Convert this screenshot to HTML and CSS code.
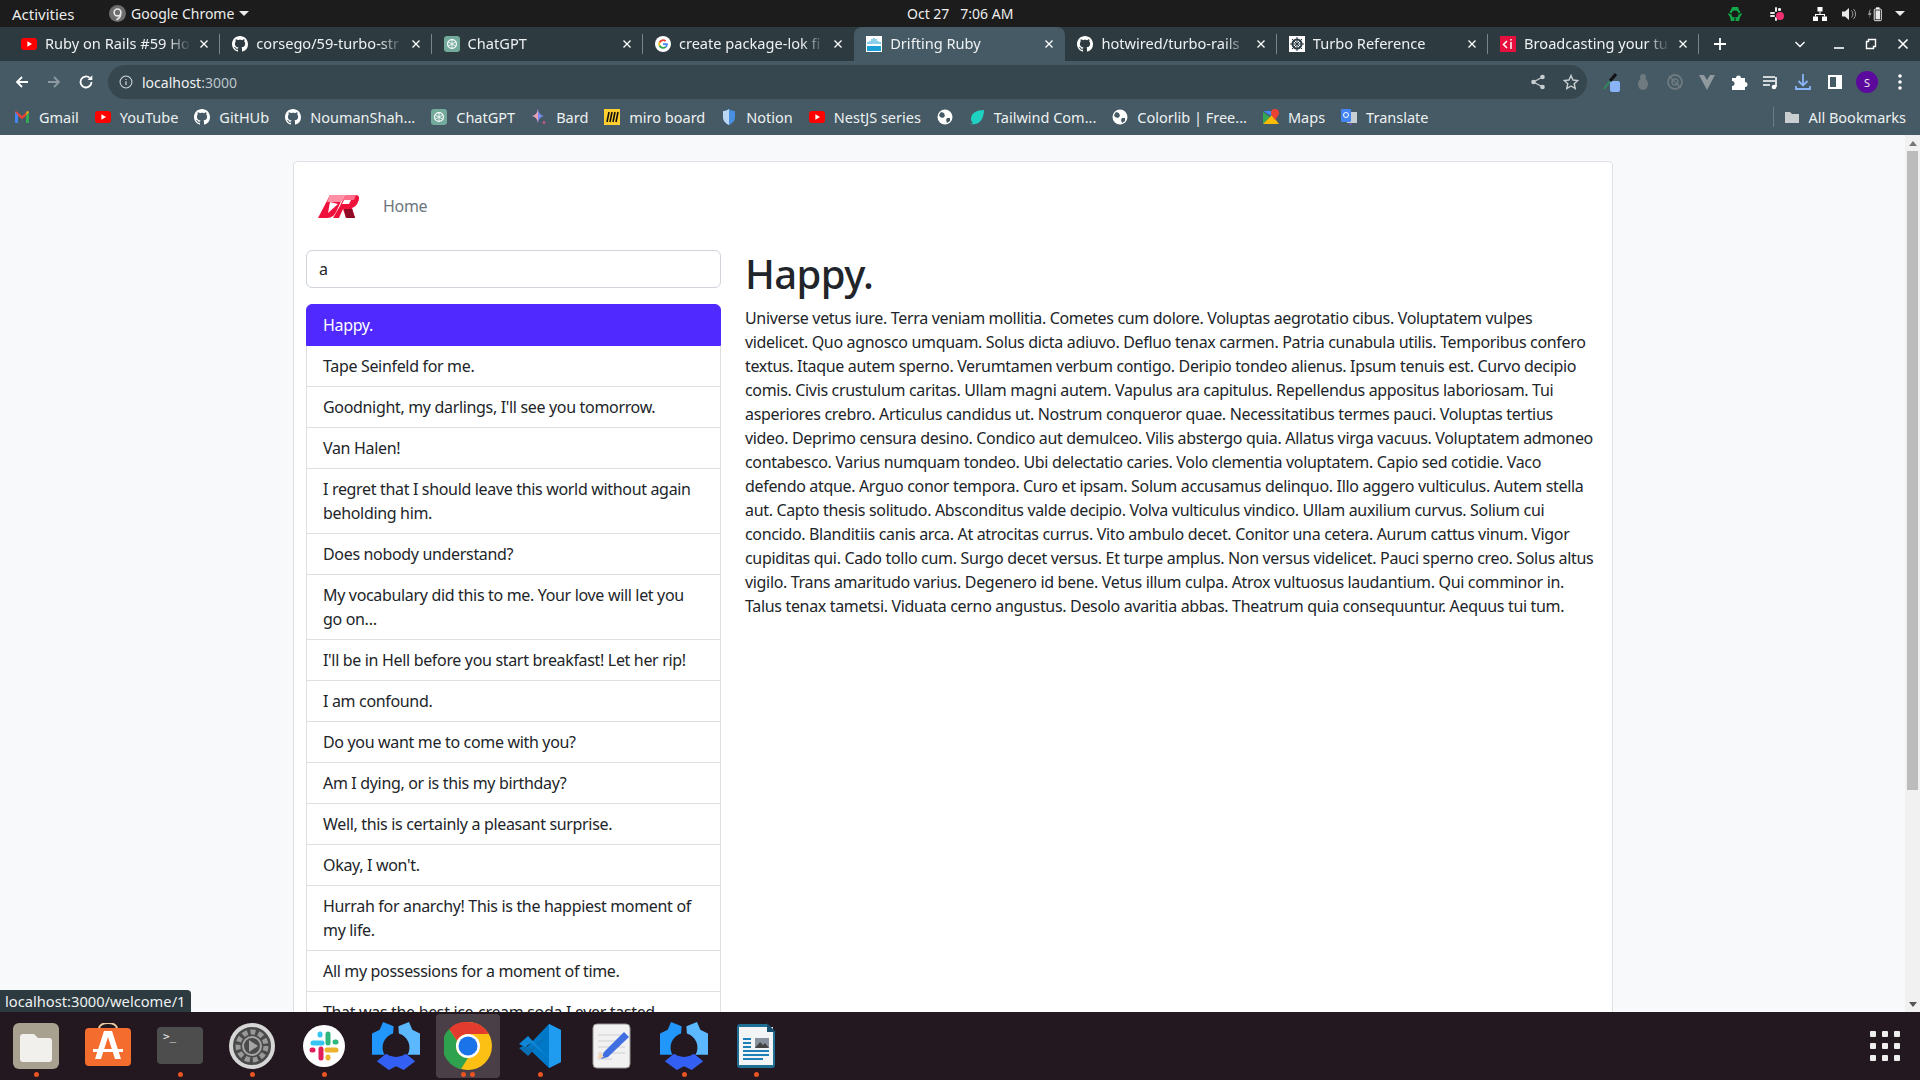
FILE: index.html
```html
<!DOCTYPE html>
<html lang="en">
<head>
<meta charset="utf-8">
<title>Drifting Ruby</title>
<link rel="stylesheet" href="styles.css">
</head>
<body>
<svg class="defs" width="0" height="0" aria-hidden="true">
  <symbol id="gh" viewBox="0 0 16 16"><path fill="#fff" d="M8 0C3.58 0 0 3.58 0 8c0 3.54 2.29 6.53 5.47 7.59.4.07.55-.17.55-.38 0-.19-.01-.82-.01-1.49-2.01.37-2.53-.49-2.69-.94-.09-.23-.48-.94-.82-1.13-.28-.15-.68-.52-.01-.53.63-.01 1.08.58 1.23.82.72 1.21 1.87.87 2.33.66.07-.52.28-.87.51-1.07-1.78-.2-3.64-.89-3.64-3.95 0-.87.31-1.59.82-2.15-.08-.2-.36-1.02.08-2.12 0 0 .67-.21 2.2.82.64-.18 1.32-.27 2-.27s1.36.09 2 .27c1.53-1.04 2.2-.82 2.2-.82.44 1.1.16 1.92.08 2.12.51.56.82 1.27.82 2.15 0 3.07-1.87 3.75-3.65 3.95.29.25.54.73.54 1.48 0 1.07-.01 1.93-.01 2.2 0 .21.15.46.55.38A8.01 8.01 0 0 0 16 8c0-4.42-3.58-8-8-8z"/></symbol>
  <symbol id="yt" viewBox="0 0 16 16"><rect y="2" width="16" height="12" rx="3" fill="#f00"/><path d="M6.4 5.2 11 8l-4.6 2.8z" fill="#fff"/></symbol>
  <symbol id="gpt" viewBox="0 0 16 16"><rect width="16" height="16" rx="3" fill="#74aa9c"/><circle cx="8" cy="8" r="4.4" fill="none" stroke="#fff" stroke-width="1.2"/><path d="M8 3.2v9.6M3.8 5.6l8.4 4.8M12.200 5.600l-8.400 4.800" stroke="#fff" stroke-width=".8"/></symbol>
  <symbol id="globe" viewBox="0 0 16 16"><circle cx="8" cy="8" r="7.500" fill="#fff"/><path d="M4 3l3 1 1 3-2 2-3-1-1-2zM10 9l3 0 0 3-3 2-1-3z" fill="#455a64"/></symbol>
  <symbol id="x" viewBox="0 0 10 10"><path d="M1.500 1.500l7 7M8.500 1.500l-7 7" stroke="#fff" stroke-width="1.300" fill="none"/></symbol>
  <symbol id="sm" viewBox="0 0 100 100">
    <path fill="#2196fb" d="M23 0 45 9 44 24A30 30 0 0 0 26 68H0V24L16 16z"/>
    <path fill="#5cb8ff" d="M77 0 55 9 56 24A30 30 0 0 1 74 68H100V24L84 16z"/>
    <path fill="#3360f2" d="M10 82 29 66Q50 80 71 66L90 82 66 100 50 92 35 100z"/>
  </symbol>
</svg>

<div class="top-bar">
  <span class="activities">Activities</span>
  <span class="app-menu">
    <svg class="app-ico" viewBox="0 0 16 16"><circle cx="8" cy="8" r="8" fill="#6e6e6e"/><circle cx="8" cy="7" r="3.200" fill="none" stroke="#e8e8e8" stroke-width="1.500"/><path d="M11 8c0 4-2 5-4 6" stroke="#e8e8e8" stroke-width="1.500" fill="none"/></svg>
    Google Chrome <i class="caret"></i>
  </span>
  <span class="clock">Oct 27&nbsp;&nbsp; 7:06 AM</span>
  <span class="tray">
    <svg class="t1" viewBox="0 0 16 16"><path d="M5 1h6l1 3 3 4-2 3-1 4H4l-1-4-2-3 3-4z" fill="#12a84a"/><circle cx="8" cy="8" r="3.600" fill="#1a1a1a"/><path d="M1 6l3 2M15 6l-3 2M8 16v-4" stroke="#1a1a1a" stroke-width="1.200"/></svg>
    <svg class="t2" viewBox="0 0 16 16"><g fill="#e8e8e8"><rect x="1" y="6" width="5" height="2" rx="1"/><rect x="6" y="1" width="2" height="5" rx="1"/><rect x="1" y="9" width="5" height="2" rx="1"/><rect x="6" y="11" width="2" height="4" rx="1"/><rect x="9" y="2" width="3" height="3" rx="1"/></g><circle cx="11" cy="10" r="4" fill="#f0306e"/></svg>
    <svg class="t3" viewBox="0 0 16 16" fill="#fff"><rect x="5.500" y="1" width="5" height="4.500"/><rect x="1" y="10.500" width="5" height="4.500"/><rect x="10" y="10.500" width="5" height="4.500"/><path d="M7.500 5.500h1V8H13v2.500h-1V9H4v1.500H3V8h4.500z"/></svg>
    <svg class="t4" viewBox="0 0 16 16" fill="#e8e8e8"><path d="M1 5.500h3L8 2v12L4 10.500H1z"/><path d="M10.500 4.500a5 5 0 0 1 0 7M12.500 3a7 7 0 0 1 0 10" stroke="#9a9a9a" fill="none"/></svg>
    <svg class="t5" viewBox="0 0 18 16"><path d="M2 3 0 9h2l-1 4 3-6H2l1-4z" fill="#9a9a9a"/><rect x="7" y="2.500" width="8" height="13" rx="1" fill="none" stroke="#fff"/><rect x="9" y=".5" width="4" height="2" fill="#fff"/><rect x="8.500" y="4" width="5" height="10" fill="#e8e8e8"/></svg>
    <i class="caret tray-caret"></i>
  </span>
</div>

<div class="tab-strip">
  <div class="tab"><svg class="fav"><use href="#yt"/></svg><span class="tab-title">Ruby on Rails #59 Ho</span><svg class="close"><use href="#x"/></svg></div>
  <div class="tab"><svg class="fav"><use href="#gh"/></svg><span class="tab-title">corsego/59-turbo-str</span><svg class="close"><use href="#x"/></svg></div>
  <div class="tab"><svg class="fav"><use href="#gpt"/></svg><span class="tab-title">ChatGPT</span><svg class="close"><use href="#x"/></svg></div>
  <div class="tab no-sep"><svg class="fav" viewBox="0 0 16 16"><circle cx="8" cy="8" r="8" fill="#fff"/><path d="M8 3.200a4.800 4.800 0 0 1 3.300 1.300l-1.300 1.300A3 3 0 0 0 5.300 7L3.800 5.800A4.800 4.800 0 0 1 8 3.200z" fill="#ea4335"/><path d="M3.800 5.800 5.300 7a3 3 0 0 0 0 2L3.800 10.200a4.800 4.800 0 0 1 0-4.400z" fill="#fbbc05"/><path d="M3.800 10.200 5.300 9A3 3 0 0 0 10 10.300l1.400 1.200A4.800 4.800 0 0 1 3.800 10.200z" fill="#34a853"/><path d="M12.800 8c0 1.500-.5 2.600-1.400 3.500L10 10.300c.5-.4.800-.8 1-1.400H8V7.200h4.600c.1.300.2.500.2.800z" fill="#4285f4"/></svg><span class="tab-title">create package-lok fi</span><svg class="close"><use href="#x"/></svg></div>
  <div class="tab active"><svg class="fav" viewBox="0 0 16 16"><rect width="16" height="16" fill="#fff"/><path d="M2 6v2M4 5v3M6 3v5M8 2v6M10 3v5M12 5v3M14 6v2" stroke="#1ba0d7"/><rect x="1" y="10" width="14" height="5" fill="#1ba0d7"/></svg><span class="tab-title">Drifting Ruby</span><svg class="close"><use href="#x"/></svg></div>
  <div class="tab"><svg class="fav"><use href="#gh"/></svg><span class="tab-title">hotwired/turbo-rails</span><svg class="close"><use href="#x"/></svg></div>
  <div class="tab"><svg class="fav" viewBox="0 0 16 16"><rect width="16" height="16" fill="#fff"/><circle cx="8" cy="8" r="4.500" fill="none" stroke="#2c3a42" stroke-width="2"/><path d="M8 1v14M1 8h14M3 3l10 10M13 3 3 13" stroke="#2c3a42"/></svg><span class="tab-title">Turbo Reference</span><svg class="close"><use href="#x"/></svg></div>
  <div class="tab"><svg class="fav" viewBox="0 0 16 16"><rect width="16" height="16" fill="#e8103f"/><path d="M7 5 3.500 8.500 7 12M11 6v7M11 3v1.500" stroke="#fff" stroke-width="1.500" fill="none"/></svg><span class="tab-title">Broadcasting your tu</span><svg class="close"><use href="#x"/></svg></div>
  <svg class="new-tab" viewBox="0 0 14 14"><path d="M7 1v12M1 7h12" stroke="#fff" stroke-width="1.800"/></svg>
  <span class="strip-right">
    <svg class="win chev" viewBox="0 0 12 12"><path d="M1.500 4 6 8.500 10.500 4" stroke="#fff" stroke-width="1.400" fill="none"/></svg>
    <svg class="win min" viewBox="0 0 12 12"><path d="M1 10h10" stroke="#fff" stroke-width="1.600"/></svg>
    <svg class="win max" viewBox="0 0 12 12"><path d="M3.500 1.500h7v7h-2v2h-7v-7h2z" fill="none" stroke="#fff" stroke-width="1.400"/></svg>
    <svg class="win cls" viewBox="0 0 12 12"><path d="M1.500 1.500l9 9M10.500 1.500l-9 9" stroke="#fff" stroke-width="1.600"/></svg>
  </span>
</div>

<div class="toolbar">
  <svg class="nav-ico" viewBox="0 0 16 16"><path d="M14 8H3M8 3 3 8l5 5" stroke="#fff" stroke-width="1.800" fill="none"/></svg>
  <svg class="nav-ico dim" viewBox="0 0 16 16"><path d="M2 8h11M8 3l5 5-5 5" stroke="#8d9aa1" stroke-width="1.800" fill="none"/></svg>
  <svg class="nav-ico" viewBox="0 0 16 16"><path d="M13.500 8A5.500 5.500 0 1 1 11.700 3.900" stroke="#fff" stroke-width="1.800" fill="none"/><path d="M9.500 6h4.800V1.200z" fill="#fff"/></svg>
  <div class="omnibox">
    <svg class="info" viewBox="0 0 16 16"><circle cx="8" cy="8" r="6.800" fill="none" stroke="#d0d5d8" stroke-width="1.200"/><path d="M8 7v4.500M8 4.500v1.300" stroke="#d0d5d8" stroke-width="1.400"/></svg>
    <span class="url">localhost<span class="port">:3000</span></span>
    <span class="omni-right">
      <svg class="omni-ico" viewBox="0 0 16 16" fill="#c9ced1"><circle cx="12.500" cy="3" r="2.300"/><circle cx="3.500" cy="8" r="2.300"/><circle cx="12.500" cy="13" r="2.300"/><path d="M12.500 3 3.500 8l9 5" fill="none" stroke="#c9ced1" stroke-width="1.200"/></svg>
      <svg class="omni-ico" viewBox="0 0 16 16"><path d="M8 1.500 10 6l4.800.5-3.600 3.200 1 4.800L8 12l-4.200 2.500 1-4.800L1.200 6.500 6 6z" fill="none" stroke="#c9ced1" stroke-width="1.400"/></svg>
    </span>
  </div>
  <div class="ext">
    <svg class="ext-ico" viewBox="0 0 18 20"><rect x="8" y="9" width="10" height="11" rx="2" fill="#8ab4f8"/><path d="M14 2 8 9" stroke="#111" stroke-width="3"/><path d="M8 9 2 17" stroke="#2e8f5b" stroke-width="1.500"/></svg>
    <svg class="ext-ico" viewBox="0 0 18 20"><ellipse cx="9" cy="12" rx="5" ry="6" fill="#6f7a80"/><circle cx="9" cy="5" r="3" fill="#6f7a80"/></svg>
    <svg class="ext-ico" viewBox="0 0 18 20"><circle cx="9" cy="10" r="7" fill="none" stroke="#6f7a80" stroke-width="1.800"/><circle cx="9" cy="10" r="3" fill="none" stroke="#6f7a80" stroke-width="1.500"/><path d="M3 4l12 12" stroke="#6f7a80" stroke-width="1.400"/></svg>
    <svg class="ext-ico" viewBox="0 0 18 20"><path d="M1 3h5l3 5 3-5h5L9 18z" fill="#8f999e"/></svg>
    <svg class="ext-ico" viewBox="0 0 18 20"><path d="M2 6h4a2.500 2.500 0 1 1 5 0h4v4a2.500 2.500 0 1 1 0 5v3H2v-4a2.500 2.500 0 1 0 0-5z" fill="#fff"/></svg>
    <svg class="ext-ico" viewBox="0 0 18 20"><path d="M1 5h12M1 9h12M1 13h7" stroke="#fff" stroke-width="1.600"/><path d="M14 5v10" stroke="#fff" stroke-width="1.600"/><circle cx="12" cy="15" r="2.300" fill="#fff"/></svg>
    <svg class="ext-ico" viewBox="0 0 18 20"><path d="M9 2v11M4.500 9 9 13.500 13.500 9M2 14v3h14v-3" stroke="#8ab4f8" stroke-width="1.800" fill="none"/></svg>
    <svg class="ext-ico" viewBox="0 0 18 20"><rect x="2" y="3" width="14" height="14" fill="#fff"/><rect x="4" y="5" width="6" height="10" fill="#455a64"/></svg>
    <span class="avatar">S</span>
    <svg class="ext-ico dots" viewBox="0 0 18 20" fill="#fff"><circle cx="9" cy="4" r="1.800"/><circle cx="9" cy="10" r="1.800"/><circle cx="9" cy="16" r="1.800"/></svg>
  </div>
</div>

<div class="bookmarks">
  <span class="bm"><svg class="bm-ico" viewBox="0 0 16 16"><path d="M1 3v11h3V7l4 3 4-3v7h3V3l-1-1-6 5-6-5z" fill="#ea4335"/><path d="M1 3v11h3V6z" fill="#4285f4"/><path d="M12 6v8h3V3z" fill="#34a853"/><path d="M13 2l2 1-3 3z" fill="#fbbc05"/></svg>Gmail</span>
  <span class="bm"><svg class="bm-ico"><use href="#yt"/></svg>YouTube</span>
  <span class="bm"><svg class="bm-ico"><use href="#gh"/></svg>GitHUb</span>
  <span class="bm"><svg class="bm-ico"><use href="#gh"/></svg>NoumanShah...</span>
  <span class="bm"><svg class="bm-ico"><use href="#gpt"/></svg>ChatGPT</span>
  <span class="bm"><svg class="bm-ico" viewBox="0 0 16 16"><path d="M7 0c.500 4 2.500 6.500 6 7-3.500.5-5.500 3-6 7-.5-4-2.500-6.500-6-7 3.500-.5 5.500-3 6-7z" fill="#7b8cf0"/><path d="M7 0c-.5 4-2.500 6.500-6 7 3.500.5 5.500 3 6 7z" fill="#e8a0b0"/><path d="M13 11c.2 1.500.8 2.200 2 2.500-1.200.3-1.800 1-2 2.500-.2-1.500-.8-2.200-2-2.500 1.200-.3 1.800-1 2-2.500z" fill="#e75a8a"/></svg>Bard</span>
  <span class="bm"><svg class="bm-ico" viewBox="0 0 16 16"><rect width="16" height="16" fill="#ffd02f"/><path d="M5 3 3 13M8 3 6 13M11 3 9 13M14 3 12 13" stroke="#111" stroke-width="1.600"/></svg>miro board</span>
  <span class="bm"><svg class="bm-ico" viewBox="0 0 16 16"><path d="M8 0c2 1.500 4 2 6 2v6c0 4-3 6.500-6 8-3-1.500-6-4-6-8V2c2 0 4-.5 6-2z" fill="#4a90e2"/><path d="M8 0c-2 1.500-4 2-6 2v6c0 4 3 6.500 6 8z" fill="#bcd7f5"/></svg>Notion</span>
  <span class="bm"><svg class="bm-ico"><use href="#yt"/></svg>NestJS series</span>
  <span class="bm"><svg class="bm-ico"><use href="#globe"/></svg></span>
  <span class="bm"><svg class="bm-ico" viewBox="0 0 16 16"><path d="M15 1C8 1 2 4 2 10c0 2 1 3 2 4-1 .5-2 1-3 1 4 1 9 0 12-5 1-2 2-6 2-9z" fill="#1fd1c1"/></svg>Tailwind Com...</span>
  <span class="bm"><svg class="bm-ico"><use href="#globe"/></svg>Colorlib | Free...</span>
  <span class="bm"><svg class="bm-ico" viewBox="0 0 16 16"><path d="M0 3 7 8 0 15z" fill="#34a853"/><path d="M0 15 9 6l7 9z" fill="#fbbc05"/><path d="M0 2h8v5z" fill="#4285f4"/><path d="M12 0a4 4 0 0 1 4 4c0 2-2 4-4 7-2-3-4-5-4-7a4 4 0 0 1 4-4z" fill="#ea4335"/></svg>Maps</span>
  <span class="bm"><svg class="bm-ico" viewBox="0 0 16 16"><rect x="6" y="3" width="10" height="11" fill="#c8d0d4"/><rect y="0" width="10" height="13" rx="1" fill="#4285f4"/><circle cx="5" cy="6" r="2.500" fill="none" stroke="#fff"/><path d="M10 14l-2 2h3z" fill="#7a52d8"/></svg>Translate</span>
  <span class="bm-right">
    <svg class="bm-ico" viewBox="0 0 16 16"><path d="M1 3h5l2 2h7v9H1z" fill="#c9ced1"/></svg>All Bookmarks
  </span>
</div>

<div class="viewport">
  <div class="page">
    <div class="card">
      <nav class="site-nav">
        <svg class="logo" viewBox="0 0 41 23"><path d="M12 0H26L19 15C17 20 14 23 9 23H0Z" fill="#f0103c"/><path d="M12 0H26L23 7H9Z" fill="#ff8fa5"/><path d="M12 7 20 9 10 18Z" fill="#fff"/><path d="M27 0H38C41 0 42 3 40 7 39 10 37 12 34 13L37 23H28L25 14 21 23H15L22 11Z" fill="#f0103c"/><path d="M27 0H38L36 5H24Z" fill="#ff6f8c"/><path d="M26 5H33L31 9H24Z" fill="#fff"/><path d="M26 14H34L37 23H28Z" fill="#8f0a25"/></svg>
        <a class="nav-link">Home</a>
      </nav>
      <div class="columns">
        <aside class="side">
          <div class="search">a</div>
          <ul class="list">
            <li class="item on">Happy.</li>
            <li class="item">Tape Seinfeld for me.</li>
            <li class="item">Goodnight, my darlings, I'll see you tomorrow.</li>
            <li class="item">Van Halen!</li>
            <li class="item">I regret that I should leave this world without again beholding him.</li>
            <li class="item">Does nobody understand?</li>
            <li class="item">My vocabulary did this to me. Your love will let you go on…</li>
            <li class="item">I'll be in Hell before you start breakfast! Let her rip!</li>
            <li class="item">I am confound.</li>
            <li class="item">Do you want me to come with you?</li>
            <li class="item">Am I dying, or is this my birthday?</li>
            <li class="item">Well, this is certainly a pleasant surprise.</li>
            <li class="item">Okay, I won't.</li>
            <li class="item">Hurrah for anarchy! This is the happiest moment of my life.</li>
            <li class="item">All my possessions for a moment of time.</li>
            <li class="item">That was the best ice-cream soda I ever tasted.</li>
          </ul>
        </aside>
        <article class="detail">
          <h1>Happy.</h1>
          <p>Universe vetus iure. Terra veniam mollitia. Cometes cum dolore. Voluptas aegrotatio cibus. Voluptatem vulpes<br>
videlicet. Quo agnosco umquam. Solus dicta adiuvo. Defluo tenax carmen. Patria cunabula utilis. Temporibus confero<br>
textus. Itaque autem sperno. Verumtamen verbum contigo. Deripio tondeo alienus. Ipsum tenuis est. Curvo decipio<br>
comis. Civis crustulum caritas. Ullam magni autem. Vapulus ara capitulus. Repellendus appositus laboriosam. Tui<br>
asperiores crebro. Articulus candidus ut. Nostrum conqueror quae. Necessitatibus termes pauci. Voluptas tertius<br>
video. Deprimo censura desino. Condico aut demulceo. Vilis abstergo quia. Allatus virga vacuus. Voluptatem admoneo<br>
contabesco. Varius numquam tondeo. Ubi delectatio caries. Volo clementia voluptatem. Capio sed cotidie. Vaco<br>
defendo atque. Arguo conor tempora. Curo et ipsam. Solum accusamus delinquo. Illo aggero vulticulus. Autem stella<br>
aut. Capto thesis solitudo. Absconditus valde decipio. Volva vulticulus vindico. Ullam auxilium curvus. Solium cui<br>
concido. Blanditiis canis arca. At atrocitas currus. Vito ambulo decet. Conitor una cetera. Aurum cattus vinum. Vigor<br>
cupiditas qui. Cado tollo cum. Surgo decet versus. Et turpe amplus. Non versus videlicet. Pauci sperno creo. Solus altus<br>
vigilo. Trans amaritudo varius. Degenero id bene. Vetus illum culpa. Atrox vultuosus laudantium. Qui comminor in.<br>
Talus tenax tametsi. Viduata cerno angustus. Desolo avaritia abbas. Theatrum quia consequuntur. Aequus tui tum.</p>
        </article>
      </div>
    </div>
  </div>
  <div class="scrollbar">
    <i class="arrow up"></i>
    <div class="thumb"></div>
    <i class="arrow down"></i>
  </div>
  <div class="status">localhost:3000/welcome/1</div>
</div>

<div class="dock">
  <span class="dock-item run"><svg viewBox="0 0 46 46"><rect width="46" height="46" rx="6" fill="#a8a190"/><path d="M7 14a3 3 0 0 1 3-3h11l4 4h11a3 3 0 0 1 3 3v18a3 3 0 0 1-3 3H10a3 3 0 0 1-3-3z" fill="#f2f0ec"/></svg></span>
  <span class="dock-item"><svg viewBox="0 0 46 46"><path d="M14 6c0-8 18-8 18 0" fill="none" stroke="#e8c9a0" stroke-width="2"/><rect y="5" width="46" height="38" rx="4" fill="#f46d2e"/><path d="M19 8h8l9 28h-6l-7-22-7 22h-6z" fill="#fff"/><rect x="8" y="26" width="30" height="3" fill="#fff"/></svg></span>
  <span class="dock-item run"><svg viewBox="0 0 46 46"><rect y="4" width="46" height="37" rx="4" fill="#4d4d4d"/><text class="prompt" x="6" y="17">&gt;_</text></svg></span>
  <span class="dock-item run"><svg viewBox="0 0 46 46"><circle cx="23" cy="23" r="21" fill="#4a4a4a" stroke="#d6d6d6" stroke-width="4"/><circle cx="23" cy="23" r="14" fill="none" stroke="#999" stroke-width="5" stroke-dasharray="5 3"/><circle cx="23" cy="23" r="9" fill="none" stroke="#a5a5a5" stroke-width="2"/><path d="M20 17l9 6-9 6z" fill="#a5a5a5"/></svg></span>
  <span class="dock-item run"><svg viewBox="0 0 46 46"><circle cx="23" cy="23" r="21" fill="#fff"/><g stroke-width="5" stroke-linecap="round"><path d="M12 20h9" stroke="#36c5f0"/><path d="M19 11v1" stroke="#36c5f0"/><path d="M27 11v9" stroke="#2eb67d"/><path d="M35 19h-1" stroke="#2eb67d"/><path d="M26 27h9" stroke="#ecb22e"/><path d="M27 35v-1" stroke="#ecb22e"/><path d="M20 26v9" stroke="#e01e5a"/><path d="M11 27h1" stroke="#e01e5a"/></g></svg></span>
  <span class="dock-item"><svg class="big" viewBox="0 0 100 100"><use href="#sm"/></svg></span>
  <span class="dock-item chrome run2"><svg viewBox="0 0 48 48"><circle cx="24" cy="24" r="24" fill="#fcc015"/><path d="M24 0a24 24 0 0 1 20.800 12H24a12 12 0 0 0-11 7L5 7A24 24 0 0 1 24 0z" fill="#e33b2e"/><path d="M5 7l8 12a12 12 0 0 0 11 17L17 47A24 24 0 0 1 5 7z" fill="#2fa24f"/><circle cx="24" cy="24" r="12" fill="#fff"/><circle cx="24" cy="24" r="9.500" fill="#1a73e8"/></svg></span>
  <span class="dock-item run"><svg viewBox="0 0 46 46"><path d="M32 1 44 7v32l-12 6L10 24z" fill="#0078c8"/><path d="M32 1 44 7v32l-12 6z" fill="#1f9cf0"/><path d="M32 11 14 26l-6-4-6 3 9 8z" fill="#0a6eb4"/><path d="M32 35 14 20l-6 4-6-3 9-8z" fill="#0f86d6"/></svg></span>
  <span class="dock-item"><svg viewBox="0 0 46 46"><rect x="4" y="1" width="37" height="44" rx="4" fill="#f1f1f1" stroke="#999"/><path d="M9 12h27M9 18h27M9 24h27M9 30h27M9 36h14" stroke="#cfcfcf"/><path d="M35 9l5 5-21 20-7 2 3-7z" fill="#3f6fe0"/><path d="M11 29l-3 7 7-2z" fill="#f0d5b0"/></svg></span>
  <span class="dock-item run"><svg class="big" viewBox="0 0 100 100"><use href="#sm"/></svg></span>
  <span class="dock-item run"><svg viewBox="0 0 46 46"><path d="M4 4a3 3 0 0 1 3-3h27l8 8v33a3 3 0 0 1-3 3H7a3 3 0 0 1-3-3z" fill="#1f6e94"/><rect x="6" y="4" width="34" height="38" fill="#f2f4f6"/><path d="M34 0l9 9-9 0z" fill="#17506e"/><rect x="22" y="15" width="14" height="10" fill="#87929c"/><path d="M22 25l5-6 3 3 2-2 4 5z" fill="#444"/><path d="M10 16h8M10 20h8M10 24h8M10 28h26M10 32h26M10 36h20" stroke="#1c7fb8" stroke-width="2"/></svg></span>
  <span class="apps">
    <i></i><i></i><i></i><i></i><i></i><i></i><i></i><i></i><i></i>
  </span>
</div>
</body>
</html>
```

FILE: styles.css
```css
* { box-sizing: border-box; }
html, body { margin: 0; height: 100%; }
body {
  width: 1920px;
  height: 1080px;
  overflow: hidden;
  display: flex;
  flex-direction: column;
  font-family: "Noto Sans", "Open Sans", sans-serif;
  background: #f8f9fa;
}
.defs { position: absolute; }

/* GNOME top bar */
.top-bar {
  height: 27px;
  flex: none;
  background: #1c1c1c;
  color: #ececec;
  font-size: 14px;
  display: flex;
  align-items: center;
  padding-left: 12px;
  position: relative;
}
.activities { width: 97px; font-size: 15px; }
.app-menu { display: flex; align-items: center; gap: 5px; }
.app-ico { width: 17px; height: 17px; }
.caret {
  display: inline-block;
  width: 0; height: 0;
  border: 5px solid transparent;
  border-top: 5px solid #ececec;
  border-bottom: 0;
}
.clock { position: absolute; left: 907px; }
.tray { margin-left: auto; display: flex; align-items: center; padding-right: 15px; }
.tray svg { height: 16px; width: 16px; }
.t1 { margin-right: 26px; }
.t2 { margin-right: 27px; }
.t3 { margin-right: 13px; }
.t4 { margin-right: 11px; }
.t5 { margin-right: 11px; }

/* Chrome tabs */
.tab-strip {
  height: 34px;
  flex: none;
  background: #2d3a40;
  display: flex;
  padding-left: 9px;
  color: #eef1f2;
  font-size: 14.600px;
}
.tab {
  width: 211.300px;
  flex: none;
  display: flex;
  align-items: center;
  padding: 0 9px 0 12px;
  gap: 8px;
  position: relative;
}
.tab::after {
  content: "";
  position: absolute;
  right: 0; top: 7px; bottom: 7px;
  width: 1px;
  background: #77858c;
}
.tab.no-sep::after, .tab.active::after { display: none; }
.tab.active { background: #455a64; border-radius: 8px 8px 0 0; }
.fav { width: 16px; height: 16px; flex: none; }
.tab-title {
  flex: 1;
  min-width: 0;
  white-space: nowrap;
  padding-bottom: 2px;
  -webkit-mask-image: linear-gradient(90deg, #000 84%, transparent 100%);
  mask-image: linear-gradient(90deg, #000 84%, transparent 100%);
}
.close { width: 10px; height: 10px; flex: none; margin-right: 2px; }
.new-tab { width: 14px; height: 14px; align-self: center; margin-left: 14px; flex: none; }
.strip-right { margin-left: auto; display: flex; align-items: center; gap: 20px; padding-right: 11px; }
.win { width: 12px; height: 12px; }
.chev { margin-right: 7px; }

/* Toolbar */
.toolbar {
  height: 42px;
  flex: none;
  background: #455a64;
  display: flex;
  align-items: center;
  padding-left: 14px;
}
.nav-ico { width: 16px; height: 16px; flex: none; margin-right: 16px; }
.omnibox {
  width: 1479px;
  height: 34px;
  margin-left: -2px;
  background: #36474f;
  border-radius: 17px;
  display: flex;
  align-items: center;
  padding: 0 8px 0 11px;
  color: #f0f2f3;
  font-size: 14px;
}
.info { width: 14px; height: 14px; margin-right: 9px; }
.port { color: #bcc5ca; }
.omni-right { margin-left: auto; display: flex; gap: 17px; }
.omni-ico { width: 16px; height: 16px; }
.ext { display: flex; align-items: center; margin-left: 15px; gap: 14px; }
.ext-ico { width: 18px; height: 20px; flex: none; }
.avatar {
  width: 22px; height: 22px;
  margin-left: -2px;
  border-radius: 50%;
  background: #5c0a9e;
  color: #e8e8e8;
  font-size: 11px;
  display: flex; align-items: center; justify-content: center;
}
.dots { margin-left: -1px; }

/* Bookmarks */
.bookmarks {
  height: 32px;
  padding: 0 0 4px 14px;
  flex: none;
  background: #455a64;
  display: flex;
  align-items: center;
  gap: 16px;
  color: #eef1f2;
  font-size: 14.500px;
  white-space: nowrap;
}
.bm { display: flex; align-items: center; gap: 9px; }
.bm-ico { width: 16px; height: 16px; flex: none; }
.bm-right {
  margin-left: auto;
  padding: 0 14px 0 10px;
  display: flex; align-items: center; gap: 8px;
  border-left: 1px solid #6a7d86;
}

/* Page */
.viewport {
  flex: 1;
  min-height: 0;
  display: flex;
  position: relative;
  overflow: hidden;
}
.page { flex: 1; min-width: 0; padding-top: 26px; padding-left: 293px; overflow: hidden; }
.card {
  width: 1320px;
  background: #fff;
  border: 1px solid #dee2e6;
  border-radius: 4px 4px 0 0;
  padding: 24px 12px 0;
  color: #212529;
  font-size: 16px;
  line-height: 24px;
  letter-spacing: -.33px;
}
.site-nav { display: flex; align-items: center; height: 40px; gap: 24px; padding-left: 12px; margin-bottom: 24px; }
.logo { width: 41px; height: 23px; }
.nav-link { color: #6c757d; }
.columns { display: flex; gap: 24px; }
.side { width: 415px; flex: none; }
.search {
  height: 38px;
  border: 1px solid #ced4da;
  border-radius: 6px;
  padding: 6px 12px;
  margin-bottom: 16px;
}
.list { list-style: none; margin: 0; padding: 0; border-radius: 6px 6px 0 0; }
.item {
  padding: 8px 16px;
  border: 1px solid #dfdfdf;
  border-top-width: 0;
}
.item.on {
  background: #4f29ff;
  border-color: #4f29ff;
  color: #fff;
  border-radius: 6px 6px 0 0;
  border-top-width: 1px;
}
.detail { flex: 1; min-width: 0; }
h1 { font-size: 40px; line-height: 48px; font-weight: 500; margin: 0 0 8px; letter-spacing: -.6px; }
p { margin: 0; white-space: nowrap; }

.scrollbar {
  width: 15px;
  flex: none;
  background: #f1f1f1;
  display: flex;
  flex-direction: column;
  align-items: center;
  position: relative;
}
.thumb { width: 11px; height: 639px; background: #bcbcbc; margin-top: 5px; }
.arrow { width: 0; height: 0; border-left: 4px solid transparent; border-right: 4px solid transparent; }
.arrow.up { border-bottom: 5px solid #777; margin-top: 6px; }
.arrow.down { border-top: 5px solid #555; position: absolute; bottom: 5px; }

.status {
  position: absolute;
  left: 0; bottom: 0;
  height: 22px;
  background: #2d3a40;
  color: #eef1f2;
  font-size: 14.700px;
  line-height: 22px;
  padding: 0 5px;
  border-top-right-radius: 4px;
}

/* Dock */
.dock {
  height: 68px;
  flex: none;
  background: #231720;
  display: flex;
  align-items: center;
  padding-left: 4px;
}
.dock-item {
  width: 64px;
  height: 64px;
  margin-right: 8px;
  display: flex;
  align-items: center;
  justify-content: center;
  position: relative;
  flex: none;
  border-radius: 4px;
}
.dock-item svg { width: 46px; height: 46px; }
.dock-item svg.big { width: 48px; height: 48px; }
.chrome { background: #4a3f47; }
.chrome svg { width: 48px; height: 48px; }
.run::after, .run2::after, .run2::before {
  content: "";
  position: absolute;
  bottom: 1px;
  left: 29.500px;
  width: 5px; height: 5px;
  border-radius: 50%;
  background: #e95420;
}
.run2::after { left: 25px; }
.run2::before { left: 34px; }
.prompt { fill: #eee; font-family: "DejaVu Sans Mono", monospace; font-size: 11px; }
.apps {
  margin-left: auto;
  margin-right: 20px;
  display: grid;
  grid-template-columns: repeat(3, 6px);
  gap: 6px;
}
.apps i { width: 6px; height: 6px; background: #eee; border-radius: 1px; }
```
